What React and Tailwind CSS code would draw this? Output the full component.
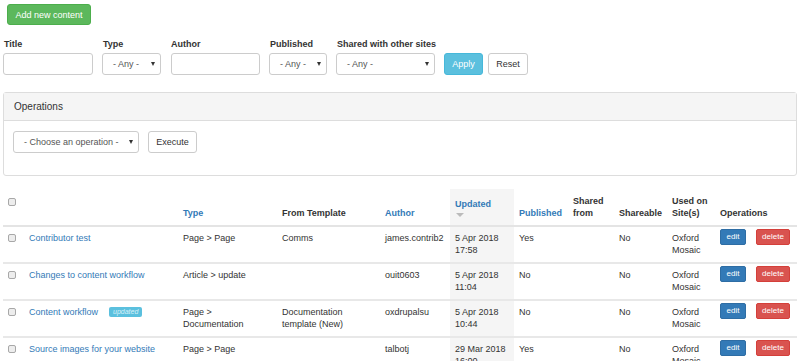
import React from "react";

const Caret = () => (
    <span className="inline-block w-0 h-0 border-l-[2.5px] border-r-[2.5px] border-t-[4px] border-l-transparent border-r-transparent border-t-[#333]" />
);

const Select = ({ text, w, pl = "pl-[10px]" }) => (
    <div className={`${w} h-[22px] border border-[#ccc] rounded-[3px] bg-white flex items-center justify-between ${pl} pr-[5px] text-[#555]`}>
        <span>{text}</span>
        <Caret />
    </div>
);

const Box = ({ className = "" }) => (
    <span className={`block w-[8px] h-[8px] border border-[#a8a8a8] rounded-[2px] bg-[#ededed] ${className}`} />
);

const rows = [
    {
        title: "Contributor test",
        type: "Page > Page",
        template: "Comms",
        author: "james.contrib2",
        date: "5 Apr 2018",
        time: "17:58",
        published: "Yes",
    },
    {
        title: "Changes to content workflow",
        type: "Article > update",
        template: "",
        author: "ouit0603",
        date: "5 Apr 2018",
        time: "11:04",
        published: "No",
    },
    {
        title: "Content workflow",
        badge: true,
        type: "Page > Documentation",
        template: "Documentation template (New)",
        author: "oxdrupalsu",
        date: "5 Apr 2018",
        time: "10:44",
        published: "No",
    },
    {
        title: "Source images for your website",
        type: "Page > Page",
        template: "",
        author: "talbotj",
        date: "29 Mar 2018",
        time: "16:00",
        published: "Yes",
    },
];

export default function App() {
    const th = "align-bottom text-left font-bold px-[5px] pt-[6px] pb-[6px] border-b-2 border-[#e4e4e4]";
    const td = "align-top px-[5px] pt-[5px] pb-[6px] border-t-2 border-[#e8e8e8]";

    return (
        <div className="font-['Liberation_Sans',Arial,sans-serif] text-[9px] leading-[12px] text-[#333] bg-white min-h-[361px] w-[800px] px-[3px] overflow-hidden">
            {/* add button */}
            <div className="pt-[4px] pl-[4px]">
                <button className="w-[84px] h-[21px] bg-[#5cb85c] border border-[#4cae4c] rounded-[3px] text-white text-[9px]">
                    Add new content
                </button>
            </div>

            {/* filters */}
            <div className="flex items-end mt-[13px]">
                <div className="w-[90px]">
                    <div className="font-bold pl-[1px] mb-[3px]">Title</div>
                    <div className="h-[22px] border border-[#ccc] rounded-[3px]" />
                </div>
                <div className="w-[59px] ml-[9px]">
                    <div className="font-bold pl-[1px] mb-[3px]">Type</div>
                    <Select text="- Any -" w="w-[59px]" />
                </div>
                <div className="w-[89px] ml-[10px]">
                    <div className="font-bold mb-[3px]">Author</div>
                    <div className="h-[22px] border border-[#ccc] rounded-[3px]" />
                </div>
                <div className="w-[58px] ml-[9px]">
                    <div className="font-bold pl-[1px] mb-[3px]">Published</div>
                    <Select text="- Any -" w="w-[58px]" />
                </div>
                <div className="w-[99px] ml-[9px]">
                    <div className="font-bold pl-[1px] mb-[3px] whitespace-nowrap">Shared with other sites</div>
                    <Select text="- Any -" w="w-[99px]" />
                </div>
                <button className="w-[39px] h-[22px] ml-[9px] bg-[#5bc0de] border border-[#46b8da] rounded-[3px] text-white text-[9px]">
                    Apply
                </button>
                <button className="w-[40px] h-[22px] ml-[5px] bg-white border border-[#ccc] rounded-[3px] text-[#333] text-[9px]">
                    Reset
                </button>
            </div>

            {/* operations panel */}
            <div className="mt-[17px] w-[794px] border border-[#ddd] rounded-[3px]">
                <div className="h-[28px] bg-[#f5f5f5] border-b border-[#ddd] flex items-center pl-[10px] text-[10px]">
                    Operations
                </div>
                <div className="flex pl-[9px] pt-[10px] pb-[22px]">
                    <Select text="- Choose an operation -" w="w-[126px]" pl="pl-[10px]" />
                    <button className="w-[49px] h-[22px] ml-[9px] bg-white border border-[#ccc] rounded-[3px] text-[9px]">
                        Execute
                    </button>
                </div>
            </div>

            {/* content table */}
            <table className="mt-[13px] table-fixed border-collapse w-[794px]">
                <colgroup>
                    <col className="w-[21px]" />
                    <col className="w-[154px]" />
                    <col className="w-[99px]" />
                    <col className="w-[103px]" />
                    <col className="w-[70px]" />
                    <col className="w-[64px]" />
                    <col className="w-[54px]" />
                    <col className="w-[46px]" />
                    <col className="w-[53px]" />
                    <col className="w-[48px]" />
                    <col className="w-[82px]" />
                </colgroup>
                <thead>
                    <tr>
                        <th className={`${th} !align-top`}>
                            <Box className="mt-[3px]" />
                        </th>
                        <th className={th}></th>
                        <th className={`${th} text-[#337ab7]`}>Type</th>
                        <th className={th}>From Template</th>
                        <th className={`${th} text-[#337ab7]`}>Author</th>
                        <th className={`${th} bg-[#f5f5f5] text-[#337ab7]`}>
                            <div>Updated</div>
                            <div className="h-[9px] pt-[3px] pl-[1px]">
                                <span className="block w-0 h-0 border-l-[4px] border-r-[4px] border-t-[4px] border-l-transparent border-r-transparent border-t-[#bbb]" />
                            </div>
                        </th>
                        <th className={`${th} text-[#337ab7]`}>Published</th>
                        <th className={th}>Shared<br />from</th>
                        <th className={th}>Shareable</th>
                        <th className={th}>Used on<br />Site(s)</th>
                        <th className={th}>Operations</th>
                    </tr>
                </thead>
                <tbody>
                    {rows.map(r => (
                        <tr key={r.title}>
                            <td className={td}>
                                <Box className="mt-[2px]" />
                            </td>
                            <td className={td}>
                                <span className="text-[#337ab7]">{r.title}</span>
                                {r.badge && (
                                    <span className="inline-block ml-[11px] px-[4px] h-[10px] leading-[10px] align-[1px] bg-[#5bc0de] rounded-[2px] text-[7px] italic text-[#d8f1f9]">
                                        updated
                                    </span>
                                )}
                            </td>
                            <td className={td}>{r.type}</td>
                            <td className={td}>{r.template}</td>
                            <td className={`${td} whitespace-nowrap`}>{r.author}</td>
                            <td className={`${td} bg-[#f5f5f5]`}>
                                {r.date}<br />{r.time}
                            </td>
                            <td className={td}>{r.published}</td>
                            <td className={td}></td>
                            <td className={td}>No</td>
                            <td className={td}>Oxford<br />Mosaic</td>
                            <td className={`${td} !pt-[2px]`}>
                                <div className="flex">
                                    <button className="w-[26px] h-[16px] bg-[#337ab7] border border-[#2e6da4] rounded-[2px] text-white text-[8px] leading-[14px]">
                                        edit
                                    </button>
                                    <button className="w-[34px] h-[16px] ml-[10px] bg-[#d9534f] border border-[#d43f3a] rounded-[2px] text-white text-[8px] leading-[14px]">
                                        delete
                                    </button>
                                </div>
                            </td>
                        </tr>
                    ))}
                </tbody>
            </table>
        </div>
    );
}
